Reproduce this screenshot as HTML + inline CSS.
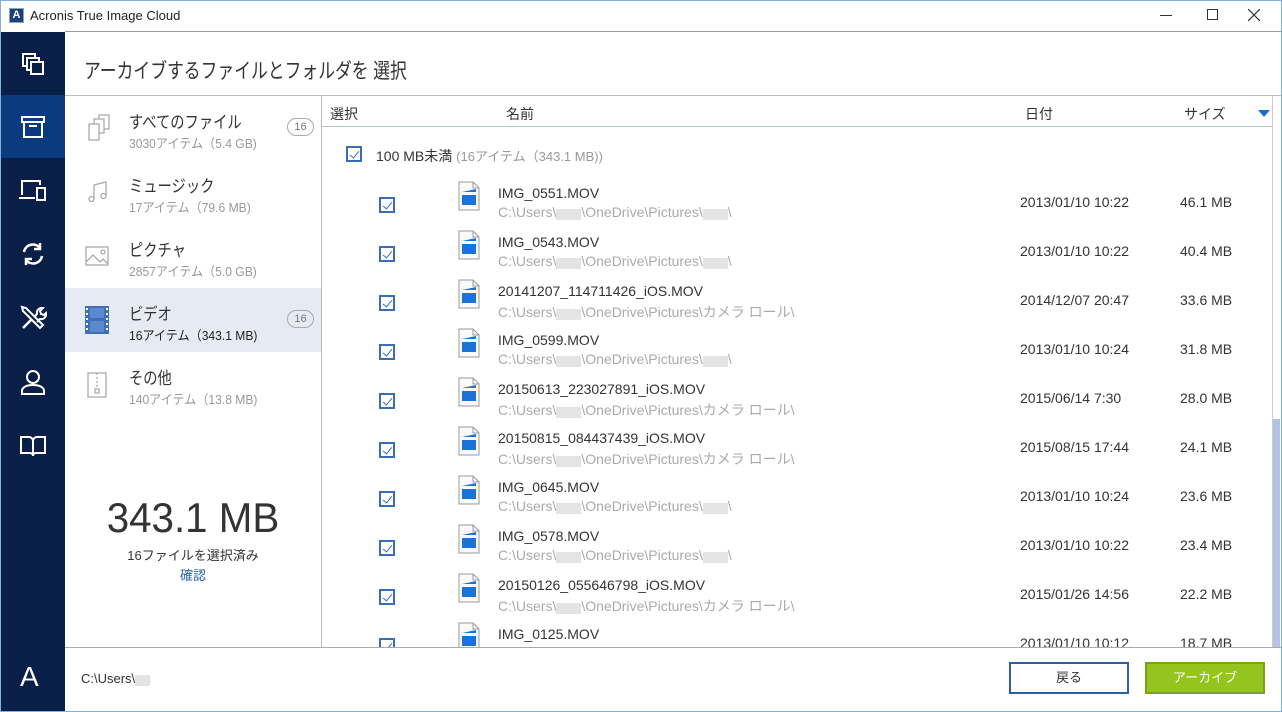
<!DOCTYPE html>
<html><head><meta charset="utf-8"><style>
*{box-sizing:border-box;margin:0;padding:0}
body{width:1282px;height:712px;overflow:hidden;background:#fff;font-family:"Liberation Sans","Noto Sans CJK JP",sans-serif;position:relative}
.abs{position:absolute}
.frame{left:0;top:0;width:1282px;height:712px;border:1px solid #7fb0e0;pointer-events:none;z-index:10}
.side{left:0;top:32px;width:65px;height:680px;background:#0a1f48}
.nav{left:0;width:65px;height:63px;display:flex;align-items:center;justify-content:center}
.cat{left:65px;width:256px;height:64px}
.cat .t{position:absolute;left:64px;top:12px;font-size:17px;color:#333;transform:scaleX(.84);transform-origin:left;white-space:nowrap}
.cat .s{position:absolute;left:64px;top:37px;font-size:13px;color:#999;transform:scaleX(.93);transform-origin:left;white-space:nowrap}
.badge{position:absolute;left:222px;top:22px;width:27px;height:18px;border:1px solid #aaa;border-radius:9px;font-size:11px;color:#777;text-align:center;line-height:16px}
.row{left:322px;width:950px;height:49px}
.cb{position:absolute;width:16px;height:16px;border:2px solid #3a6db8}
.cb:after{content:"";position:absolute;left:4px;top:1px;width:4px;height:8px;border:solid #3a6db8;border-width:0 1.5px 1.5px 0;transform:rotate(40deg)}
.fn{position:absolute;left:176px;top:5px;font-size:14px;color:#333}
.fp{position:absolute;left:176px;top:24px;font-size:14px;color:#aaa;white-space:nowrap}
.dt{position:absolute;left:698px;top:14px;font-size:14px;color:#333}
.sz{position:absolute;left:858px;top:14px;font-size:14px;color:#333}
.ic{position:absolute;left:136px;top:1px}
.blur{color:transparent;background:#e4e4e4;font-size:10px}
</style></head><body>
<div class="abs frame"></div>
<div class="abs" style="left:9px;top:8px;width:15px;height:15px;background:#1e3f7a;border:1px solid #8aa;color:#fff;font-size:11px;font-weight:bold;text-align:center;line-height:13px">A</div>
<div class="abs" style="left:30px;top:8px;font-size:13px;color:#222">Acronis True Image Cloud</div>
<div class="abs" style="left:1160px;top:15px;width:12px;height:1px;background:#333"></div>
<div class="abs" style="left:1207px;top:9px;width:11px;height:11px;border:1px solid #333"></div>
<svg class="abs" style="left:1248px;top:9px" width="12" height="12"><path d="M0 0L12 12M12 0L0 12" stroke="#333" stroke-width="1.2"/></svg>
<div class="abs" style="left:65px;top:31px;width:1217px;height:1px;background:#999"></div>
<div class="abs side"></div>
<div class="abs nav" style="top:32px"><svg width="26" height="26" viewBox="0 0 26 26" fill="none" stroke="#fff" stroke-width="2"><rect x="3" y="3" width="12" height="12"/><rect x="7" y="7" width="12" height="12" fill="#0a1f48"/><rect x="11" y="11" width="12" height="12" fill="#0a1f48"/></svg></div>
<div class="abs nav" style="top:95px;background:#0c3a7e"><svg width="26" height="26" viewBox="0 0 26 26" fill="none" stroke="#fff" stroke-width="2"><rect x="2" y="3" width="22" height="5"/><rect x="4" y="8" width="18" height="15"/><line x1="9" y1="12" x2="17" y2="12"/></svg></div>
<div class="abs nav" style="top:158px"><svg width="30" height="26" viewBox="0 0 30 26" fill="none" stroke="#fff" stroke-width="2"><path d="M4 18V4h18v4"/><path d="M1 21h16"/><rect x="19" y="11" width="8" height="12"/></svg></div>
<div class="abs nav" style="top:222px"><svg width="28" height="28" viewBox="0 0 28 28" fill="none" stroke="#fff" stroke-width="2.5"><path d="M5 12a9 9 0 0 1 16-4"/><path d="M21 3v6h-6"/><path d="M23 16a9 9 0 0 1-16 4"/><path d="M7 25v-6h6"/></svg></div>
<div class="abs nav" style="top:286px"><svg width="28" height="28" viewBox="0 0 28 28" fill="none" stroke="#fff" stroke-width="2.5"><path d="M3 3l4 1 14 14 3 3-3 3-3-3L4 7z" stroke-width="2"/><path d="M4 24l9-9"/><path d="M15 13l3-3a5 5 0 0 1 6-6l-3 3 1 3 3 1 2-2a5 5 0 0 1-6 6l-3 3" stroke-width="2"/></svg></div>
<div class="abs nav" style="top:350px"><svg width="28" height="28" viewBox="0 0 28 28" fill="none" stroke="#fff" stroke-width="2"><circle cx="14" cy="9" r="6"/><path d="M3 26v-3c0-4 5-6 11-6s11 2 11 6v3z"/></svg></div>
<div class="abs nav" style="top:414px"><svg width="28" height="26" viewBox="0 0 28 26" fill="none" stroke="#fff" stroke-width="2"><path d="M2 4h8a4 4 0 0 1 4 4v15a3 3 0 0 0-3-3H2z"/><path d="M26 4h-8a4 4 0 0 0-4 4v15a3 3 0 0 1 3-3h9z"/></svg></div>
<div class="abs" style="left:20px;top:661px;color:#fff;font-size:28px">A</div>
<div class="abs" style="left:84px;top:55px;font-size:21px;color:#333;transform:scaleX(.8);transform-origin:left;white-space:nowrap">アーカイブするファイルとフォルダを 選択</div>
<div class="abs" style="left:65px;top:95px;width:1217px;height:1px;background:#bbb"></div>
<div class="abs" style="left:321px;top:95px;width:1px;height:552px;background:#bbb"></div>
<div class="abs cat" style="top:96px"><svg class="abs" style="left:22px;top:18px" width="24" height="28" viewBox="0 0 24 28" fill="#fff" stroke="#aaa" stroke-width="1.3"><rect x="12" y="1" width="10" height="14"/><rect x="7" y="5" width="10" height="14"/><rect x="2" y="10" width="10" height="16"/></svg><div class="t">すべてのファイル</div><div class="s">3030アイテム（5.4 GB)</div><div class="badge">16</div></div>
<div class="abs cat" style="top:160px"><svg class="abs" style="left:22px;top:20px" width="22" height="24" viewBox="0 0 22 24" fill="none" stroke="#aaa" stroke-width="1.3"><path d="M7 19V5l12-3v14"/><circle cx="4.5" cy="19" r="2.5"/><circle cx="16.5" cy="16" r="2.5"/></svg><div class="t">ミュージック</div><div class="s">17アイテム（79.6 MB)</div></div>
<div class="abs cat" style="top:224px"><svg class="abs" style="left:20px;top:22px" width="24" height="20" viewBox="0 0 24 20" fill="none" stroke="#aaa" stroke-width="1.3"><rect x="1" y="1" width="22" height="18"/><path d="M1 16l7-7 7 7 3-3 5 5"/><circle cx="18" cy="6" r="2"/></svg><div class="t">ピクチャ</div><div class="s">2857アイテム（5.0 GB)</div></div>
<div class="abs cat" style="top:288px;background:#e6eaf2"><svg class="abs" style="left:20px;top:18px" width="24" height="28" viewBox="0 0 24 28"><rect x="0" y="0" width="24" height="28" fill="#3f6fb7"/><rect x="5" y="2" width="14" height="10" fill="#5b8ad0"/><rect x="5" y="15" width="14" height="11" fill="#5b8ad0"/><g fill="#fff"><rect x="1" y="2" width="2" height="2"/><rect x="1" y="7" width="2" height="2"/><rect x="1" y="12" width="2" height="2"/><rect x="1" y="17" width="2" height="2"/><rect x="1" y="22" width="2" height="2"/><rect x="21" y="2" width="2" height="2"/><rect x="21" y="7" width="2" height="2"/><rect x="21" y="12" width="2" height="2"/><rect x="21" y="17" width="2" height="2"/><rect x="21" y="22" width="2" height="2"/></g></svg><div class="t">ビデオ</div><div class="s" style="color:#222">16アイテム（343.1 MB)</div><div class="badge">16</div></div>
<div class="abs cat" style="top:352px"><svg class="abs" style="left:22px;top:20px" width="20" height="26" viewBox="0 0 20 26" fill="none" stroke="#aaa" stroke-width="1.3"><rect x="1" y="1" width="18" height="24"/><path d="M10 1v16" stroke-dasharray="2 2"/><rect x="8" y="17" width="4" height="4"/></svg><div class="t">その他</div><div class="s">140アイテム（13.8 MB)</div></div>
<div class="abs" style="left:65px;top:494px;width:256px;text-align:center;font-size:42px;color:#333;transform:scaleX(.96)">343.1 MB</div>
<div class="abs" style="left:65px;top:545px;width:256px;text-align:center;font-size:13px;color:#333">16ファイルを選択済み</div>
<div class="abs" style="left:65px;top:565px;width:256px;text-align:center;font-size:13px;color:#2a64b0">確認</div>
<div class="abs" style="left:330px;top:104px;font-size:14px;color:#333">選択</div>
<div class="abs" style="left:506px;top:104px;font-size:14px;color:#333">名前</div>
<div class="abs" style="left:1025px;top:104px;font-size:14px;color:#333">日付</div>
<div class="abs" style="left:1184px;top:104px;font-size:14px;color:#333">サイズ</div>
<div class="abs" style="left:1258px;top:110px;width:0;height:0;border-left:6px solid transparent;border-right:6px solid transparent;border-top:7px solid #1a6fc8"></div>
<div class="abs" style="left:322px;top:126px;width:951px;height:1px;background:#b8c4d4"></div>
<div class="abs" style="left:1272px;top:96px;width:1px;height:551px;background:#ccc"></div>
<div class="abs" style="left:1273px;top:419px;width:7px;height:228px;background:#b4c4e0"></div>
<div class="abs" style="left:346px;top:146px;width:16px;height:16px"><div class="cb" style="left:0;top:0"></div></div>
<div class="abs" style="left:376px;top:146px;font-size:14px;color:#333">100 MB未満 <span style="color:#999;font-size:13px">(16アイテム（343.1 MB))</span></div>
<div class="abs" style="left:322px;top:176px;width:950px;height:471px;overflow:hidden">
<div id="rows"></div>
</div>
<script>
var d=[["IMG_0551.MOV","b","b\\","2013/01/10 10:22","46.1 MB"],["IMG_0543.MOV","b","b\\","2013/01/10 10:22","40.4 MB"],["20141207_114711426_iOS.MOV","b","カメラ ロール\\","2014/12/07 20:47","33.6 MB"],["IMG_0599.MOV","b","b\\","2013/01/10 10:24","31.8 MB"],["20150613_223027891_iOS.MOV","b","カメラ ロール\\","2015/06/14 7:30","28.0 MB"],["20150815_084437439_iOS.MOV","b","カメラ ロール\\","2015/08/15 17:44","24.1 MB"],["IMG_0645.MOV","b","b\\","2013/01/10 10:24","23.6 MB"],["IMG_0578.MOV","b","b\\","2013/01/10 10:22","23.4 MB"],["20150126_055646798_iOS.MOV","b","カメラ ロール\\","2015/01/26 14:56","22.2 MB"],["IMG_0125.MOV","b","","2013/01/10 10:12","18.7 MB"]];
var B='<span class="blur">xxxxx</span>';
var h="";d.forEach(function(r,i){var p=r[2]=="b\\"?B+'\\':r[2];h+='<div class="abs row" style="left:0;top:'+(i*49+4)+'px"><div class="cb" style="left:57px;top:17px"></div><svg class="ic" width="22" height="30" viewBox="0 0 22 30"><path d="M1 1h14l6 6v22H1z" fill="#fafafa" stroke="#999"/><path d="M15 1v6h6" fill="none" stroke="#999"/><rect x="4" y="14" width="14" height="10" fill="#1a73d9"/><path d="M4 11l14-3v3z" fill="#1a73d9"/></svg><div class="fn">'+r[0]+'</div><div class="fp">C:\\Users\\'+B+'\\OneDrive\\Pictures\\'+p+'</div><div class="dt">'+r[3]+'</div><div class="sz">'+r[4]+'</div></div>'});
document.getElementById("rows").innerHTML=h;
</script>
<div class="abs" style="left:65px;top:647px;width:1216px;height:1px;background:#aaa"></div>
<div class="abs" style="left:81px;top:671px;font-size:13px;color:#333">C:\Users\<span class="blur">xxx</span></div>
<div class="abs" style="left:1009px;top:662px;width:120px;height:32px;border:2px solid #2a5fa8;text-align:center;line-height:28px;font-size:13px;color:#333">戻る</div>
<div class="abs" style="left:1145px;top:662px;width:120px;height:32px;background:#96c41f;border:2px solid #7aa418;text-align:center;line-height:28px;font-size:13px;color:#fff">アーカイブ</div>
</body></html>
